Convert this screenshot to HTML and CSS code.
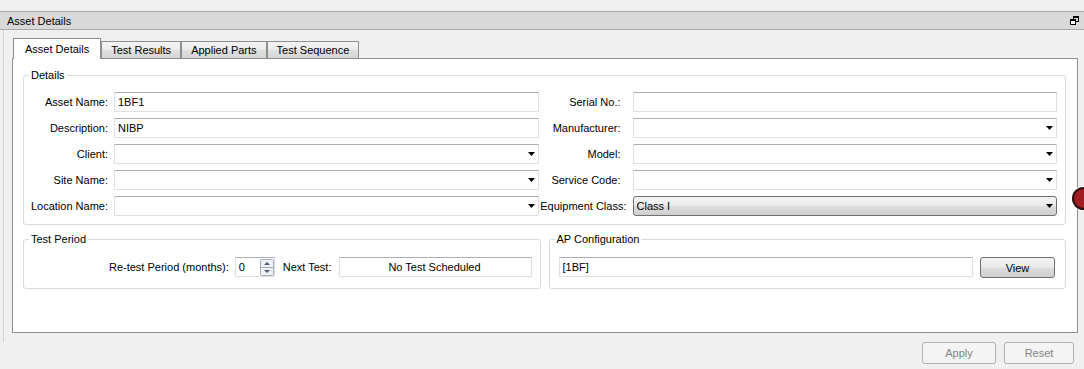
FILE: index.html
```html
<!DOCTYPE html>
<html>
<head>
<meta charset="utf-8">
<title>Asset Details</title>
<link rel="stylesheet" href="styles.css">
</head>
<body>
<div class="dock-title">
  <span>Asset Details</span>
  <svg class="restore" width="9" height="9" viewBox="0 0 9 9">
    <path d="M3 0h6v2H3zM8 2h1v4H8zM6 5h2v1H6zM3 2h1v1H3z" fill="#000"/>
    <rect x="1" y="5" width="4" height="3" fill="#fff"/>
    <path d="M0 3h6v2H0zM0 5h1v4H0zM5 5h1v4H5zM1 8h4v1H1z" fill="#000"/>
  </svg>
</div>
<div class="dock-body">
  <div class="tabs">
    <div class="tab active">Asset Details</div>
    <div class="tab">Test Results</div>
    <div class="tab">Applied Parts</div>
    <div class="tab">Test Sequence</div>
  </div>
  <div class="pane">
    <fieldset class="group">
      <legend>Details</legend>
      <div class="form-grid">
        <label class="lbl">Asset Name:</label>
        <div class="field">1BF1</div>
        <label class="lbl lbl-r">Serial No.:</label>
        <div class="field"></div>

        <label class="lbl">Description:</label>
        <div class="field">NIBP</div>
        <label class="lbl lbl-r">Manufacturer:</label>
        <div class="field combo"><span></span><svg class="arrow" width="7" height="4" viewBox="0 0 7 4"><path d="M0 0h7L3.5 4z"/></svg></div>

        <label class="lbl">Client:</label>
        <div class="field combo"><span></span><svg class="arrow" width="7" height="4" viewBox="0 0 7 4"><path d="M0 0h7L3.5 4z"/></svg></div>
        <label class="lbl lbl-r">Model:</label>
        <div class="field combo"><span></span><svg class="arrow" width="7" height="4" viewBox="0 0 7 4"><path d="M0 0h7L3.5 4z"/></svg></div>

        <label class="lbl">Site Name:</label>
        <div class="field combo"><span></span><svg class="arrow" width="7" height="4" viewBox="0 0 7 4"><path d="M0 0h7L3.5 4z"/></svg></div>
        <label class="lbl lbl-r">Service Code:</label>
        <div class="field combo"><span></span><svg class="arrow" width="7" height="4" viewBox="0 0 7 4"><path d="M0 0h7L3.5 4z"/></svg></div>

        <label class="lbl">Location Name:</label>
        <div class="field combo"><span></span><svg class="arrow" width="7" height="4" viewBox="0 0 7 4"><path d="M0 0h7L3.5 4z"/></svg></div>
        <label class="lbl">Equipment Class:</label>
        <div class="field combo raised"><span>Class I</span><svg class="arrow" width="7" height="4" viewBox="0 0 7 4"><path d="M0 0h7L3.5 4z"/></svg></div>
      </div>
    </fieldset>

    <div class="group-row">
      <fieldset class="group">
        <legend>Test Period</legend>
        <div class="period-row">
          <span>Re-test Period (months):</span>
          <div class="spin">
            <span class="spin-val">0</span>
            <svg class="spin-btns" width="14" height="17" viewBox="0 0 14 17">
              <rect x="0.5" y="0.5" width="13" height="16" rx="1" fill="#eef2f8" stroke="#a5acb5"/>
              <path d="M1 8.5h12" stroke="#a5acb5"/>
              <path d="M4 6h6L7 3z" fill="#4f5d73"/>
              <path d="M4 11h6l-3 3z" fill="#4f5d73"/>
            </svg>
          </div>
          <span class="next-lbl">Next Test:</span>
          <div class="field next-field">No Test Scheduled</div>
        </div>
      </fieldset>
      <fieldset class="group">
        <legend>AP Configuration</legend>
        <div class="ap-row">
          <div class="field ap-field">[1BF]</div>
          <div class="btn raised">View</div>
        </div>
      </fieldset>
    </div>
  </div>
</div>
<div class="actions">
  <div class="btn disabled btn-apply">Apply</div>
  <div class="btn disabled btn-reset">Reset</div>
</div>
<div class="marker"></div>
</body>
</html>
```

FILE: styles.css
```css
html, body {
  margin: 0;
  padding: 0;
}

body {
  width: 1084px;
  height: 369px;
  overflow: hidden;
  position: relative;
  background: #f0f0f0;
  color: #000;
  font-family: "Liberation Sans", Arial, sans-serif;
  font-size: 11px;
}

.dock-title {
  margin-top: 11px;
  height: 17px;
  border-top: 1px solid #a9a9a9;
  border-bottom: 1px solid #a9a9a9;
  background: #d9d9d9;
  display: flex;
  align-items: center;
  justify-content: space-between;
  padding: 0 5px 0 7px;
}

.restore {
  display: block;
}

.dock-body {
  margin-left: 3px;
  border-left: 1px solid #d2d2d2;
  padding: 8px 6px 9px 8px;
}

.tabs {
  display: flex;
  align-items: flex-end;
  height: 20px;
  padding-left: 1px;
}

.tab {
  box-sizing: border-box;
  height: 17px;
  line-height: 16px;
  padding: 0 9px;
  border: 1px solid #8e8f91;
  border-bottom: none;
  background: linear-gradient(#f4f4f4, #ececec 45%, #dedede 55%, #d6d6d6);
  white-space: nowrap;
}

.tab.active {
  height: 21px;
  line-height: 20px;
  margin-bottom: -1px;
  padding: 0 11px;
  background: #fff;
  position: relative;
  z-index: 1;
}

.pane {
  box-sizing: border-box;
  height: 275px;
  border: 1px solid #8e8f91;
  background: #fff;
  padding: 10px 11px 0 10px;
}

.group {
  margin: 0;
  padding: 0;
  min-width: 0;
  border: 1px solid #dadada;
  border-radius: 3px;
}

.group legend {
  margin-left: 5px;
  padding: 0 2px;
  line-height: 13px;
}

.form-grid {
  display: grid;
  grid-template-columns: 75px 1fr 82px 1fr;
  grid-auto-rows: 20px;
  column-gap: 6px;
  row-gap: 6px;
  padding: 10px 8px 8px 9px;
  align-items: center;
}

.lbl {
  justify-self: end;
  white-space: nowrap;
}

.lbl-r {
  padding-right: 6px;
}

.field {
  box-sizing: border-box;
  height: 20px;
  border: 1px solid #dde1e6;
  border-top-color: #abadb3;
  background: #fff;
  padding: 0 4px 0 3px;
  display: flex;
  align-items: center;
  white-space: nowrap;
}

.combo {
  justify-content: space-between;
}

.arrow {
  display: block;
  margin-right: -1px;
}

.raised {
  border: 1px solid #707070;
  border-radius: 3px;
  background: linear-gradient(#f3f3f3, #ebebeb 48%, #dddddd 52%, #cfcfcf);
}

.group-row {
  display: flex;
  gap: 8px;
  margin-top: 8px;
}

.group-row .group {
  flex: 1;
}

.period-row {
  display: flex;
  align-items: center;
  justify-content: flex-end;
  padding: 11px 8px 10px 9px;
}

.spin {
  box-sizing: border-box;
  width: 40px;
  height: 20px;
  margin-left: 6px;
  border: 1px solid #dde1e6;
  border-top-color: #abadb3;
  display: flex;
  align-items: center;
  justify-content: space-between;
  padding: 0 0 0 3px;
}

.spin-btns {
  display: block;
}

.next-lbl {
  margin-left: 8px;
}

.next-field {
  width: 193px;
  margin-left: 7px;
  justify-content: center;
}

.ap-row {
  display: flex;
  align-items: center;
  gap: 7px;
  padding: 10px 10px 10px 9px;
}

.ap-field {
  flex: 1;
}

.btn {
  box-sizing: border-box;
  height: 21px;
  display: flex;
  align-items: center;
  justify-content: center;
}

.ap-row .btn {
  width: 75px;
  margin-top: 1px;
}

.actions {
  display: flex;
  justify-content: flex-end;
  gap: 8px;
  padding-right: 10px;
}

.btn.disabled {
  height: 22px;
  border: 1px solid #adb2b5;
  border-radius: 3px;
  background: #f4f4f4;
  color: #838383;
}

.btn-apply {
  width: 74px;
}

.btn-reset {
  width: 70px;
}

.marker {
  position: absolute;
  left: 1072px;
  top: 187px;
  width: 19px;
  height: 19px;
  border-radius: 50%;
  background: #a11d22;
  border: 2px solid #2b0c0c;
  box-shadow: 0 0 0 1px #fff;
}
```
